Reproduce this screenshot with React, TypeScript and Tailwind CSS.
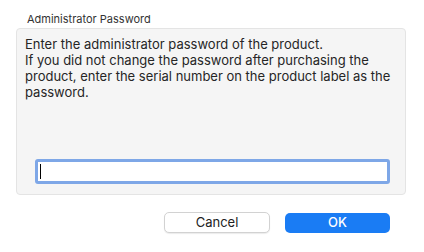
export default function App() {
  return (
    <div
      className="w-[424px] h-[252px] bg-white flex flex-col overflow-hidden"
      style={{ fontFamily: "Inter, 'Liberation Sans', sans-serif" }}
    >
      {/* Group title */}
      <div className="pl-[27px] pt-[12px] h-[28px] text-[11px] leading-[14px] text-[#333]">
        Administrator Password
      </div>

      {/* Group box */}
      <div className="ml-[16px] w-[390px] h-[167px] bg-[#f5f5f5] border border-[#e4e4e4] rounded-[4px] flex flex-col">
        <p className="pl-[8px] pr-[10px] pt-[7px] text-[13px] leading-[16px] text-[#262626]">
          Enter the administrator password of the product.
          <br />
          If you did not change the password after purchasing the product, enter the serial number on the product label as the password.
        </p>
        <div className="mt-auto mb-[10px] ml-[18px] mr-[15px] h-[25px] rounded-[3px] border-[3px] border-[#7ea7e7] bg-white flex items-center pl-[2px]">
          <span className="w-px h-[15px] bg-black" />
        </div>
      </div>

      {/* Buttons */}
      <div className="flex pl-[164px] pt-[17px] gap-[15px]">
        <button className="w-[106px] h-[21px] rounded-[5px] bg-white border border-[#d2d2d2] shadow-[0_1px_1px_rgba(0,0,0,0.08)] text-[13px] text-[#222]">
          Cancel
        </button>
        <button className="w-[105px] h-[20px] mt-[1px] rounded-[5px] bg-[#1a7cf4] text-[13px] font-medium text-white">
          OK
        </button>
      </div>
    </div>
  );
}
